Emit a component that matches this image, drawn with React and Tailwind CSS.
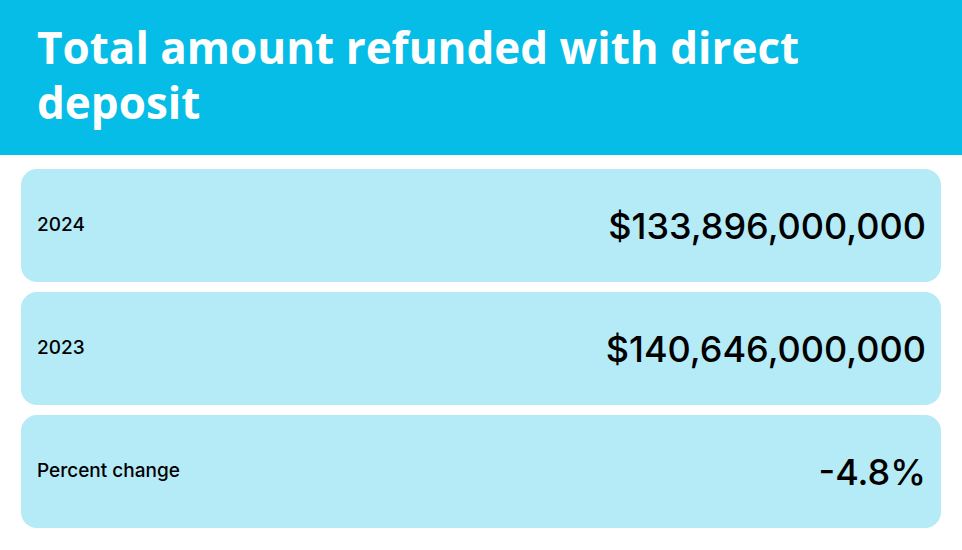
const rows = [
  { label: "2024", value: "$133,896,000,000" },
  { label: "2023", value: "$140,646,000,000" },
  { label: "Percent change", value: "-4.8%" },
];

export default function App() {
  return (
    <div className="w-[962px] h-[550px] bg-white font-['Inter',sans-serif] overflow-hidden">
      <div className="bg-[#05bde6] h-[155px] pl-[37px] pt-5">
        <h1 className="text-white font-['Open_Sans',sans-serif] font-bold text-[44px] leading-[55px] w-[840px]">
          Total amount refunded with direct deposit
        </h1>
      </div>
      <div className="flex flex-col gap-[10px] px-[21px] pt-[14px]">
        {rows.map((row) => (
          <div
            key={row.label}
            className="h-[113px] bg-[#b5eaf7] rounded-[16px] flex items-center justify-between pl-4 pr-[15px]"
          >
            <span className="text-[19px] text-black font-medium">{row.label}</span>
            <span className="text-[36px] text-black font-medium">{row.value}</span>
          </div>
        ))}
      </div>
    </div>
  );
}
